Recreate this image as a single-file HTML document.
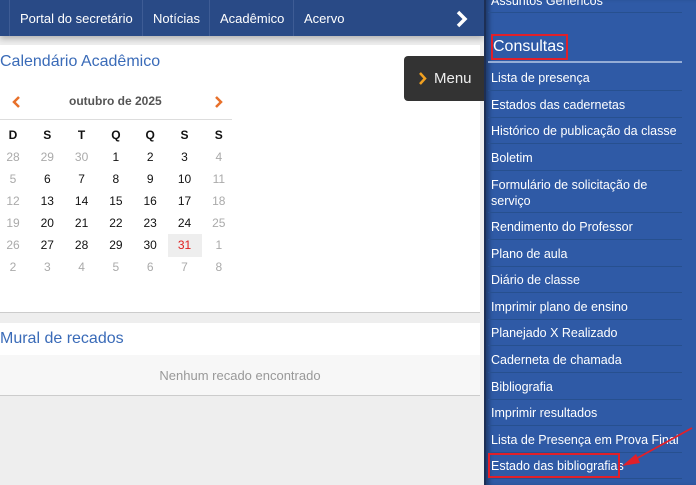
<!DOCTYPE html>
<html><head><meta charset="utf-8"><style>
*{margin:0;padding:0;box-sizing:border-box}
body{width:696px;height:485px;overflow:hidden;background:#eeeeee;font-family:"Liberation Sans",sans-serif;position:relative}
.nav{position:absolute;left:0;top:0;width:484px;height:36px;background:#294a86;box-shadow:0 3px 6px rgba(0,0,0,.25)}
.nav span{position:absolute;top:0;height:36px;line-height:38px;color:#fff;font-size:13px;border-left:1px solid #3e5c95;padding-left:10px}
.cal{position:absolute;left:0;top:45px;width:480px;height:268px;background:#fff;border-bottom:1px solid #ccc}
.h{color:#3a6bb8;font-size:16px;position:absolute;left:0}
.d{position:absolute;width:34px;text-align:center;font-size:12px;color:#111}
.g{color:#aaa}
.mural{position:absolute;left:0;top:323px;width:480px;height:73px;background:#f7f7f7;border-bottom:1px solid #ccc}
.side{position:absolute;left:484px;top:0;width:212px;height:485px;background:#2f5aa6;border-left:2px solid #1d2f55;box-shadow:inset 5px 0 5px -2px rgba(0,0,0,.35)}
.it{position:absolute;left:5px;color:#fff;font-size:12.5px;line-height:16px}
.ln{position:absolute;left:2px;width:194px;height:1px;background:#27508f}
.menu{position:absolute;left:404px;top:56px;width:80px;height:45px;background:#333;border-radius:4px 0 0 4px;color:#eee;font-size:15px;line-height:45px;padding-left:30px}
</style></head><body>
<div class="nav">
<span style="left:9px;width:133px">Portal do secretário</span>
<span style="left:142px;width:67px">Notícias</span>
<span style="left:209px;width:84px">Acadêmico</span>
<span style="left:293px;width:80px">Acervo</span>
<svg style="position:absolute;left:455px;top:10px" width="14" height="18"><path d="M3 2 L10 9 L3 16" stroke="#fff" stroke-width="3.5" fill="none"/></svg>
</div>
<div class="cal">
<div class="h" style="top:8px">Calendário Acadêmico</div>
<svg style="position:absolute;left:11px;top:50px" width="10" height="14"><path d="M8 2 L3 7 L8 12" stroke="#e8702a" stroke-width="2.5" fill="none"/></svg>
<div style="position:absolute;left:69px;top:49px;font-size:12px;font-weight:bold;color:#555">outubro de 2025</div>
<svg style="position:absolute;left:214px;top:50px" width="10" height="14"><path d="M2 2 L7 7 L2 12" stroke="#e8702a" stroke-width="2.5" fill="none"/></svg>
<div style="position:absolute;left:0;top:74px;width:232px;height:1px;background:#ddd"></div>
<div style="position:absolute;left:168px;top:189px;width:34px;height:23px;background:#eee"></div>
<div id="g"></div>
</div>
<div class="mural">
<div style="position:absolute;left:0;top:0;width:480px;height:32px;background:#fff"></div>
<div class="h" style="top:7px;font-size:16px">Mural de recados</div>
<div style="position:absolute;left:0;top:45px;width:480px;text-align:center;font-size:13px;color:#999">Nenhum recado encontrado</div>
</div>
<div class="menu">Menu<svg style="position:absolute;left:14px;top:15px" width="10" height="15"><path d="M2 2 L7 7.5 L2 13" stroke="#f0a020" stroke-width="2.5" fill="none"/></svg></div>
<div class="side">
<div class="it" style="top:-7px">Assuntos Genéricos</div>
<div class="ln" style="top:12px"></div>
<div style="position:absolute;left:5px;top:34px;width:77px;height:26px;border:2px solid #e0202a"></div>
<div class="it" style="left:7px;top:37px;font-size:16px;line-height:20px">Consultas</div>
<div style="position:absolute;left:2px;top:61px;width:194px;height:2px;background:#95add6"></div>
<div id="s"></div>
<div style="position:absolute;left:2px;top:453px;width:132px;height:25px;border:2px solid #e0202a"></div>
<svg style="position:absolute;left:130px;top:420px" width="80" height="50"><path d="M76 8 L16 41" stroke="#e0202a" stroke-width="1.8"/><path d="M6 46 L20 34 L24 43 Z" fill="#e0202a"/></svg>
</div>
<script>
var rows=[["D","S","T","Q","Q","S","S"],["28g","29g","30g","1","2","3","4g"],["5g","6","7","8","9","10","11g"],["12g","13","14","15","16","17","18g"],["19g","20","21","22","23","24","25g"],["26g","27","28","29","30","31r","1g"],["2g","3g","4g","5g","6g","7g","8g"]];
var h="";rows.forEach(function(r,i){r.forEach(function(c,j){var cl="d",st="";if(c.slice(-1)=="g"){cl+=" g";c=c.slice(0,-1)}if(c.slice(-1)=="r"){st="color:#e02020;";c=c.slice(0,-1)}if(i==0)st+="font-weight:bold;";h+='<div class="'+cl+'" style="'+st+'left:'+(j*34.3-4)+'px;top:'+(83+i*22)+'px">'+c+'</div>'})});
document.getElementById("g").innerHTML=h;
var it=[["Lista de presença",77],["Estados das cadernetas",104],["Histórico de publicação da classe",130],["Boletim",157],["Formulário de solicitação de<br>serviço",184],["Rendimento do Professor",226],["Plano de aula",253],["Diário de classe",279],["Imprimir plano de ensino",306],["Planejado X Realizado",332],["Caderneta de chamada",359],["Bibliografia",386],["Imprimir resultados",412],["Lista de Presença em Prova Final",439],["Estado das bibliografias",465]];
var s="",lines=[90,117,143,170,212,239,266,292,319,345,372,399,425,452,478];
it.forEach(function(a,i){s+='<div class="it" style="top:'+(a[1]-7)+'px">'+a[0]+'</div><div class="ln" style="top:'+lines[i]+'px"></div>'});
document.getElementById("s").innerHTML=s;
</script>
</body></html>
